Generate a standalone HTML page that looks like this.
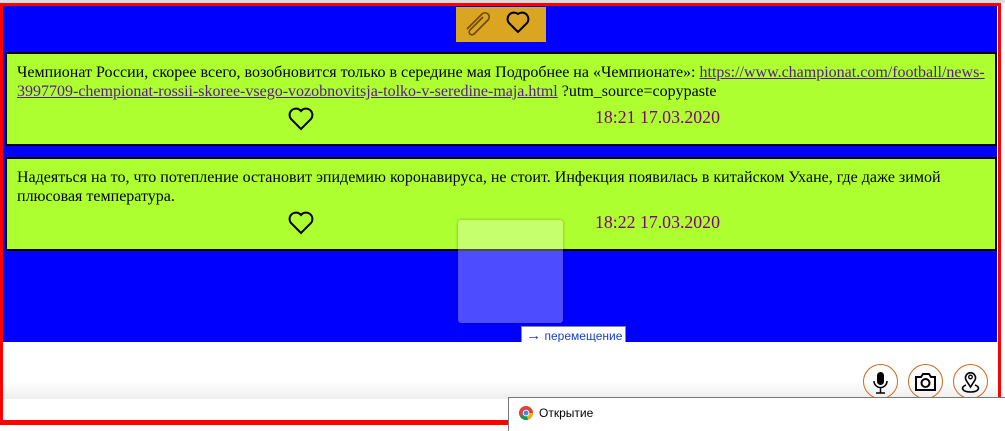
<!DOCTYPE html>
<html><head><meta charset="utf-8"><style>
body{margin:0;width:1005px;height:430px;overflow:hidden;background:#fff;position:relative;font-family:"Liberation Serif",serif;}
.frame{position:absolute;left:0;top:3px;width:995px;height:416px;border:3px solid #f00;background:#fff;}
.blue{position:absolute;left:3px;top:6px;width:994px;height:336px;background:#0000ff;}
.gold{position:absolute;left:456px;top:7px;width:90px;height:35px;background:#daa520;}
.card{position:absolute;left:5px;width:988px;background:#adff2f;border:2px solid #000;font-size:16px;color:#000;}
.card p{margin:0;position:absolute;left:10px;top:9px;width:975px;line-height:19px;}
.card a{color:#551a8b;}
.time{position:absolute;left:588px;font-size:17.8px;color:#800080;}
.heart{position:absolute;}
.tip{position:absolute;left:521px;top:326px;width:103px;height:17px;background:#fff;border:1px solid #888;font:12px "Liberation Sans",sans-serif;color:#1a3fd0;line-height:17px;white-space:nowrap;}
.drag{position:absolute;left:458px;top:220px;width:105px;height:103px;background:rgba(255,255,255,0.3);border-radius:3px;box-shadow:0 0 3px rgba(0,0,0,.3);}
.btn{position:absolute;top:364px;width:33px;height:33px;border:1px solid #d2691e;border-radius:50%;}
.dlg{position:absolute;left:508px;top:397px;width:497px;height:33px;background:#fff;border-top:1px solid #777;border-left:1px solid #777;font:12px "Liberation Sans",sans-serif;}
</style></head><body>
<div style="position:absolute;left:0;top:0;width:1005px;height:3px;background:#ddd"></div>
<div class="frame"></div>
<div class="blue"></div>
<div class="gold">
<svg width="90" height="35"><path d="M12 26 L27 11 a4 4 0 0 1 6 6 L19 31 a2.5 2.5 0 0 1 -4 -4 L28 14" fill="none" stroke="#6b4a10" stroke-width="1.6" transform="translate(-1,-4)"/>
<path d="M62 33 L54 25 a6 6 0 0 1 8 -10 a6 6 0 0 1 8 10 Z" fill="none" stroke="#000" stroke-width="2" transform="translate(0,-8)"/></svg></div>
<div class="card" style="top:52px;height:90px"><p>Чемпионат России, скорее всего, возобновится только в середине мая Подробнее на «Чемпионате»: <a href="#">https://www.championat.com/football/news-3997709-chempionat-rossii-skoree-vsego-vozobnovitsja-tolko-v-seredine-maja.html</a> ?utm_source=copypaste</p>
<svg class="heart" style="left:280px;top:52px" width="28" height="26"><path d="M14 23 L4 13 a6 6 0 0 1 10 -8 a6 6 0 0 1 10 8 Z" fill="none" stroke="#000" stroke-width="2"/></svg>
<div class="time" style="top:53px">18:21 17.03.2020</div></div>
<div class="card" style="top:157px;height:90px"><p>Надеяться на то, что потепление остановит эпидемию коронавируса, не стоит. Инфекция появилась в китайском Ухане, где даже зимой плюсовая температура.</p>
<svg class="heart" style="left:280px;top:51px" width="28" height="26"><path d="M14 23 L4 13 a6 6 0 0 1 10 -8 a6 6 0 0 1 10 8 Z" fill="none" stroke="#000" stroke-width="2"/></svg>
<div class="time" style="top:53px">18:22 17.03.2020</div></div>
<div class="drag"></div>
<div class="tip"><span style="font-size:15px">&nbsp;→</span> перемещение</div>
<div style="position:absolute;left:3px;top:342px;width:994px;height:57px;background:linear-gradient(#fff 70%,#eee)"></div>
<div class="btn" style="left:863px"><svg width="33" height="33"><rect x="13" y="7" width="7" height="13" rx="3.5" fill="#000"/><path d="M10 16 a6.5 6.5 0 0 0 13 0 M16.5 23 V28 M12 28 H21" stroke="#000" stroke-width="1.5" fill="none"/></svg></div>
<div class="btn" style="left:908px"><svg width="33" height="33"><path d="M7 12 H12 L14 9 H20 L22 12 H26 V25 H7 Z" fill="none" stroke="#000" stroke-width="2"/><circle cx="16.5" cy="18" r="4" fill="none" stroke="#000" stroke-width="2"/></svg></div>
<div class="btn" style="left:953px"><svg width="33" height="33"><path d="M16.5 22 L12 15 a5 5 0 1 1 9 0 Z" fill="none" stroke="#000" stroke-width="1.6"/><circle cx="16.5" cy="12" r="1.8" fill="none" stroke="#000" stroke-width="1.3"/><path d="M12 20 C6 22 8 27 16.5 27 C25 27 27 22 21 20" fill="none" stroke="#000" stroke-width="1.6"/></svg></div>
<div style="position:absolute;left:0;top:420px;width:508px;height:3px;background:#f00"></div>
<div class="dlg"><svg style="position:absolute;left:10px;top:8px" width="14" height="14"><circle cx="7" cy="7" r="7" fill="#db4437"/><path d="M7 7 L1 10.5 A7 7 0 0 0 9 13.7 Z" fill="#0f9d58"/><path d="M7 7 L9 13.7 A7 7 0 0 0 14 7 Z" fill="#f4b400"/><circle cx="7" cy="7" r="3.3" fill="#fff"/><circle cx="7" cy="7" r="2.4" fill="#4285f4"/></svg><span style="position:absolute;left:30px;top:8px">Открытие</span></div>
</body></html>
